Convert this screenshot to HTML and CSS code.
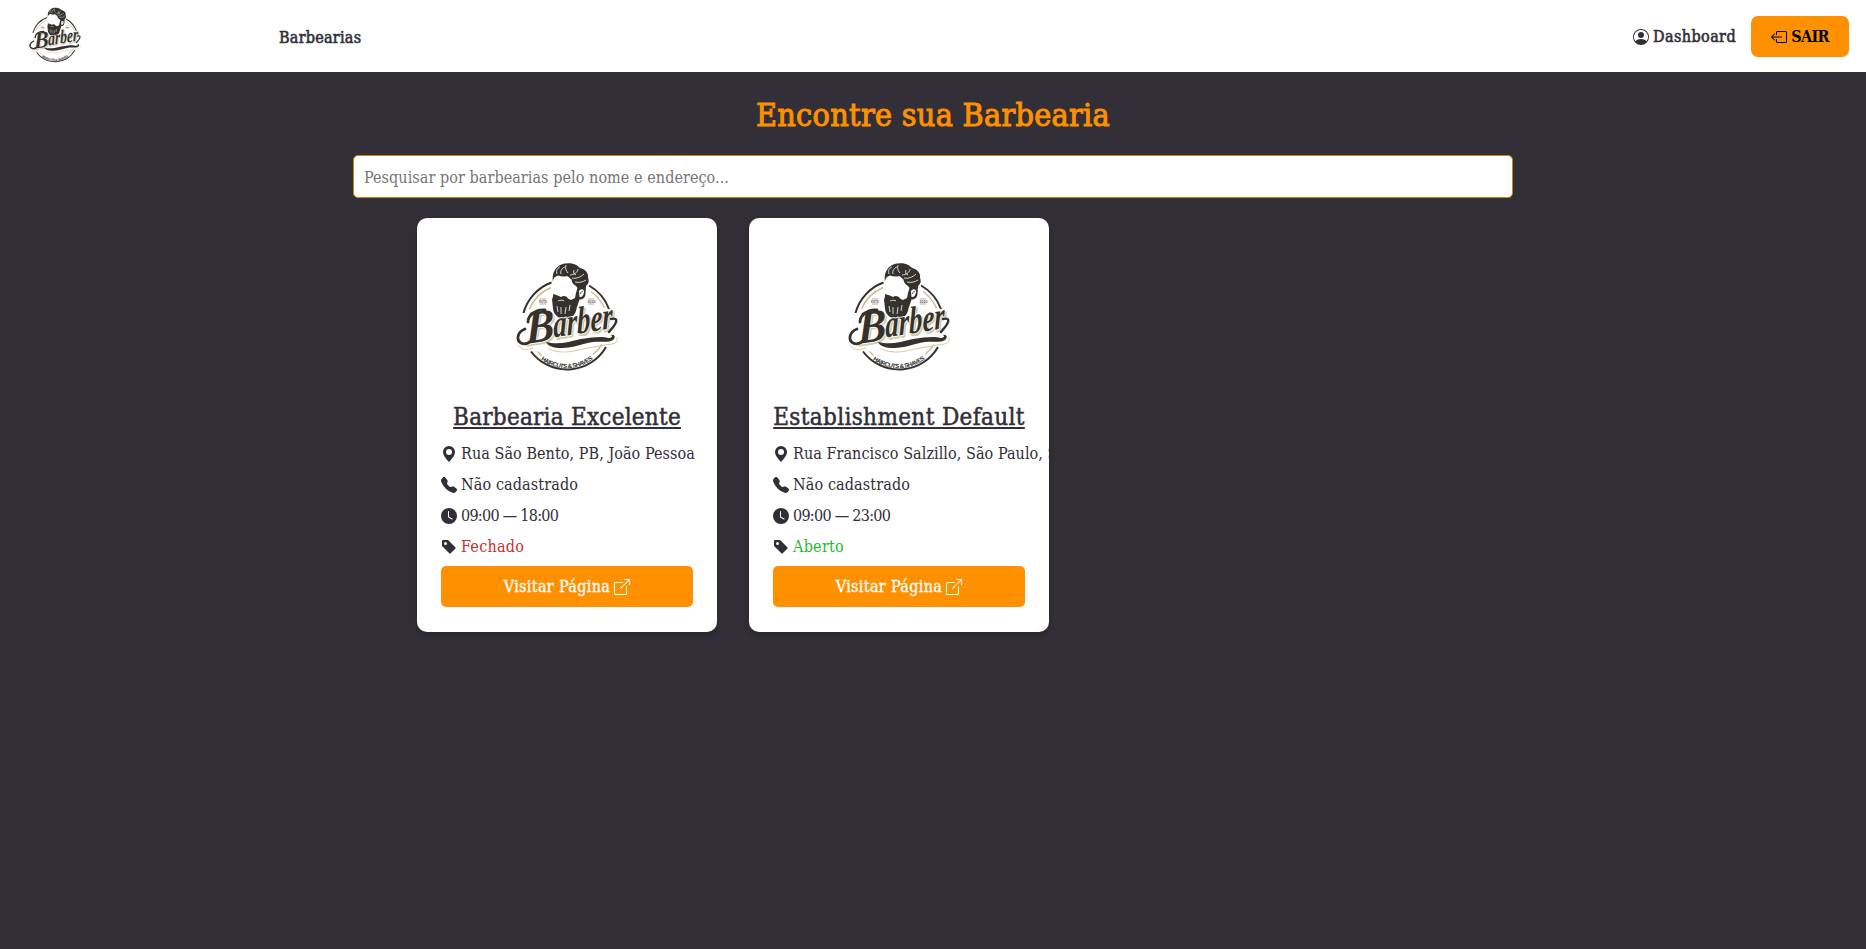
FILE: index.html
```html
<!DOCTYPE html>
<html lang="pt-BR">
<head>
<meta charset="utf-8">
<title>Barbearias</title>
<link rel="stylesheet" href="styles.css">
</head>
<body>
<svg class="sprite" aria-hidden="true">
  <symbol id="logo" viewBox="0 2 134 148">
    <g fill="none" stroke="#35322d" stroke-width="2">
      <path d="M23.5 73A45 45 0 0 1 51.5 42.5"/>
      <path d="M89 45.5A45 45 0 0 1 109 69"/>
      <path d="M31 111.500A45 45 0 0 0 106 107"/>
    </g>
    <g fill="none" stroke="#cdb98b" stroke-width="1.400">
      <path d="M29.500 69A41 41 0 0 1 51 47.500"/>
      <path d="M91 51.500A41 41 0 0 1 104.500 68"/>
      <path d="M37.500 111.500l4 4M102 104.500a41 41 0 0 1-9 10"/>
    </g>
    <g stroke="#77746f" stroke-width=".6"><path d="M40 59h6M40 64h6M88 59h6M88 64h6"/></g>
    <text class="logo-tiny" x="39" y="62.800" textLength="8" lengthAdjust="spacingAndGlyphs">ESTD</text>
    <text class="logo-tiny" x="87.500" y="62.800" textLength="8" lengthAdjust="spacingAndGlyphs">2020</text>
    <path fill="#35322d" d="M53.500 45c-1.500-6-1-12 1.500-15 2-4 7-6.500 11-6.500 7-1 11 1.500 14 4.500 5 1 9 5 8 10 1.500 3 .5 6-2 8l-.5 8c-.3 4-3 5.500-6 5.500l-3 9c-1 7-6 11-11 10-7 1-12-4-12.500-10l-1-9 1-3z"/>
    <path fill="#fff" d="M53 54c-1-6-1-12 1-16 1.500-1.500 2.500-2 4-2.500 3 1 6 1.500 9 .5 2 1 3 2.500 4.500 3.500 0 3 2 5 4.500 6.500l1.500 2-1.500 5-1 5-4 2-3-1.500c-2-3-5-3-7-1.500-2-1-4-2-8-3z"/>
    <path fill="#fff" d="M79 51c2-3 5.500-2 5 1.500-.5 3-2 5-4.500 4.500z"/>
    <g fill="none" stroke="#fff" stroke-width=".8">
      <path d="M57 34c-1-3 0-6 3-7M61 34c-1-3 1-6 4-7M66 25c-1 3 0 6 2 8M70 35c4 0 8-3 8-6M72 38c4 1 9-1 12-4M75 42c4 1 8 0 11-2M74 30c-1 3 0 4 2 5M58 61c2-1 5-1 6 0M57 66l1 6M61 67v7M66 67l-1 7M70 65l-1 6"/>
    </g>
    <path fill="none" stroke="#35322d" stroke-width=".8" d="M80.500 54c0-2 1.500-3 2.500-2"/>
    <g transform="translate(26 104) rotate(-9) skewX(-8)">
      <text class="logo-script logo-script-shade" x="1.500" y="2" textLength="29" lengthAdjust="spacingAndGlyphs">B</text>
      <text class="logo-script logo-script-shade logo-script-low" x="29.500" y="0" textLength="60" lengthAdjust="spacingAndGlyphs">arber</text>
      <text class="logo-script logo-script-ink" x="0" y="0" textLength="29" lengthAdjust="spacingAndGlyphs">B</text>
      <text class="logo-script logo-script-ink logo-script-low" x="28" y="-2" textLength="60" lengthAdjust="spacingAndGlyphs">arber</text>
    </g>
    <g fill="none" stroke-linecap="round">
      <path stroke="#d9c9a2" stroke-width="1" d="M18 105c3 5 9 6 15 3M49 109c10 5 23 3 34 0l22-4c9-1 14-2 12-7"/>
      <path stroke="#35322d" stroke-width="2.800" d="M45 70c-9-1-17 5-17 12M25 89c-8 3-9 11-4 14 4 2 8 0 11-3"/>
      <path stroke="#35322d" stroke-width="2.400" d="M111 79c4-1 6 0 5 3-1 4-5 7-7 10"/>
    </g>
    <path fill="#35322d" d="M46 102c13 3 22 0 35-3 12-2 22-3 27-1 4 0 5-2 3-3 4-1 5 3 2 5-5 3-11 1-20 2-12 2-20 6-31 6-9 0-14-2-16-6z"/>
    <path id="logo-arc" fill="none" d="M37 116.500A43 43 0 0 0 98 114.500"/>
    <text class="logo-arc-text"><textPath href="#logo-arc" startOffset="5" textLength="56">HAIRCUTS &amp; SHAVES</textPath></text>
  </symbol>
  <symbol id="pin" viewBox="0 0 16 16"><path d="M8 16s6-5.686 6-10A6 6 0 0 0 2 6c0 4.314 6 10 6 10m0-7a3 3 0 1 1 0-6 3 3 0 0 1 0 6"/></symbol>
  <symbol id="phone" viewBox="0 0 16 16"><path fill-rule="evenodd" d="M1.885.511a1.745 1.745 0 0 1 2.610.163L6.290 2.980c.329.423.445.974.315 1.494l-.547 2.190a.68.68 0 0 0 .178.643l2.457 2.457a.68.68 0 0 0 .644.178l2.189-.547a1.750 1.750 0 0 1 1.494.315l2.306 1.794c.829.645.905 1.870.163 2.611l-1.034 1.034c-.740.740-1.846 1.065-2.877.702a18.600 18.600 0 0 1-7.010-4.420 18.600 18.600 0 0 1-4.420-7.009c-.362-1.030-.037-2.137.703-2.877z"/></symbol>
  <symbol id="clock" viewBox="0 0 16 16"><path d="M16 8A8 8 0 1 1 0 8a8 8 0 0 1 16 0M8 3.500a.5.5 0 0 0-1 0V9a.5.5 0 0 0 .252.434l3.500 2a.5.5 0 0 0 .496-.868L8 8.710z"/></symbol>
  <symbol id="tag" viewBox="0 0 16 16"><path d="M2 1a1 1 0 0 0-1 1v4.586a1 1 0 0 0 .293.707l7 7a1 1 0 0 0 1.414 0l4.586-4.586a1 1 0 0 0 0-1.414l-7-7A1 1 0 0 0 6.586 1zm4 3.500a1.500 1.500 0 1 1-3 0 1.500 1.500 0 0 1 3 0"/></symbol>
  <symbol id="open" viewBox="0 0 16 16"><path d="M8.636 3.500a.5.5 0 0 0-.5-.5H1.500A1.500 1.500 0 0 0 0 4.500v10A1.500 1.500 0 0 0 1.500 16h10a1.500 1.500 0 0 0 1.500-1.500V7.864a.5.5 0 0 0-1 0V14.500a.5.5 0 0 1-.5.5h-10a.5.5 0 0 1-.5-.5v-10a.5.5 0 0 1 .5-.5h6.636a.5.5 0 0 0 .5-.5"/><path d="M16 .5a.5.5 0 0 0-.5-.5h-5a.5.5 0 0 0 0 1h3.793L6.146 9.146a.5.5 0 1 0 .708.708L15 1.707V5.500a.5.5 0 0 0 1 0z"/></symbol>
  <symbol id="person" viewBox="0 0 16 16"><path d="M11 6a3 3 0 1 1-6 0 3 3 0 0 1 6 0"/><path fill-rule="evenodd" d="M0 8a8 8 0 1 1 16 0A8 8 0 0 1 0 8m8-7a7 7 0 0 0-5.468 11.370C3.242 11.226 4.805 10 8 10s4.757 1.225 5.468 2.370A7 7 0 0 0 8 1"/></symbol>
  <symbol id="exit" viewBox="0 0 16 16"><path fill-rule="evenodd" d="M6 12.500a.5.5 0 0 0 .5.5h8a.5.5 0 0 0 .5-.5v-9a.5.5 0 0 0-.5-.5h-8a.5.5 0 0 0-.5.5v2a.5.5 0 0 1-1 0v-2A1.500 1.500 0 0 1 6.500 2h8A1.500 1.500 0 0 1 16 3.500v9a1.500 1.500 0 0 1-1.500 1.500h-8A1.500 1.500 0 0 1 5 12.500v-2a.5.5 0 0 1 1 0z"/><path fill-rule="evenodd" d="M.146 8.354a.5.5 0 0 1 0-.708l3-3a.5.5 0 1 1 .708.708L1.707 7.500H10.500a.5.5 0 0 1 0 1H1.707l2.147 2.146a.5.5 0 0 1-.708.708z"/></symbol>
</svg>

<header class="navbar">
  <a class="brand"><svg class="brand-logo" viewBox="8 16 118 118"><use href="#logo" x="0" y="2" width="134" height="148"/></svg></a>
  <nav class="nav-links"><a class="nav-text">Barbearias</a></nav>
  <div class="nav-actions">
    <a class="dashboard"><svg class="icon"><use href="#person"/></svg><span class="nav-text nav-text-dash">Dashboard</span></a>
    <button class="logout"><svg class="icon"><use href="#exit"/></svg><span class="logout-text">SAIR</span></button>
  </div>
</header>

<main class="page">
  <h1 class="title">Encontre sua Barbearia</h1>
  <input class="search" type="text" placeholder="Pesquisar por barbearias pelo nome e endereço...">
  <section class="cards">
    <article class="card">
      <svg class="card-logo"><use href="#logo"/></svg>
      <h2 class="card-title card-title-wide">Barbearia Excelente</h2>
      <p class="row"><svg class="icon"><use href="#pin"/></svg><span class="address">Rua São Bento, PB, João Pessoa</span></p>
      <p class="row"><svg class="icon"><use href="#phone"/></svg><span class="phone">Não cadastrado</span></p>
      <p class="row"><svg class="icon"><use href="#clock"/></svg><span class="hours">09:00 — 18:00</span></p>
      <p class="row"><svg class="icon"><use href="#tag"/></svg><span class="status closed">Fechado</span></p>
      <a class="visit"><span>Visitar Página</span><svg class="icon"><use href="#open"/></svg></a>
    </article>
    <article class="card">
      <svg class="card-logo"><use href="#logo"/></svg>
      <h2 class="card-title">Establishment Default</h2>
      <p class="row"><svg class="icon"><use href="#pin"/></svg><span class="address">Rua Francisco Salzillo, São Paulo, SP</span></p>
      <p class="row"><svg class="icon"><use href="#phone"/></svg><span class="phone">Não cadastrado</span></p>
      <p class="row"><svg class="icon"><use href="#clock"/></svg><span class="hours">09:00 — 23:00</span></p>
      <p class="row"><svg class="icon"><use href="#tag"/></svg><span class="status open">Aberto</span></p>
      <a class="visit"><span>Visitar Página</span><svg class="icon"><use href="#open"/></svg></a>
    </article>
  </section>
</main>
</body>
</html>
```
FILE: styles.css
```css
* { box-sizing: border-box; }
body {
  margin: 0;
  min-height: 949px;
  background: #322f38;
  color: #312e38;
  font: 16px "DejaVu Serif Condensed", "DejaVu Serif", serif;
}
.sprite { display: none; }
.icon { width: 16px; height: 16px; flex: none; fill: currentColor; }

.navbar {
  display: flex;
  align-items: center;
  height: 72px;
  padding: 0 17px 0 25px;
  background: #fff;
}
.brand { display: flex; width: 254px; padding-bottom: 5px; }
.brand-logo { width: 60px; height: 60px; }
.nav-links { flex: 1; padding-top: 2px; }
.nav-text { -webkit-text-stroke: .55px currentColor; letter-spacing: .25px; }
.nav-text-dash { letter-spacing: .4px; }
.nav-actions { display: flex; align-items: center; gap: 15px; padding-top: 1px; }
.dashboard { display: flex; align-items: center; gap: 4px; }
.logout {
  display: flex;
  align-items: center;
  justify-content: center;
  gap: 4px;
  width: 98px;
  height: 41px;
  padding: 0;
  border: 0;
  border-radius: 7px;
  background: #ff9000;
  color: #000;
  font: inherit;
}
.logout-text { font-weight: bold; letter-spacing: -.7px; }

.page { display: flex; flex-direction: column; align-items: center; }
.title {
  margin: 20px 0 0;
  height: 63px;
  color: #ff9000;
  font-size: 32px;
  font-weight: 400;
  line-height: 46px;
  letter-spacing: .3px;
  -webkit-text-stroke: 1px currentColor;
}
.search {
  width: 1160px;
  height: 43px;
  padding: 1px 10px 0;
  border: 1px solid #d88006;
  border-radius: 5px;
  background: #fff;
  font: inherit;
  letter-spacing: .06px;
}
.search::placeholder { color: #757575; opacity: 1; }

.cards {
  display: grid;
  grid-template-columns: repeat(3, 300px);
  justify-content: start;
  gap: 32px;
  width: 1032px;
  margin-top: 20px;
}
.card {
  display: flex;
  flex-direction: column;
  height: 414px;
  padding: 24px;
  border-radius: 10px;
  background: #fff;
  box-shadow: 0 4px 8px rgba(0, 0, 0, .2);
  overflow: hidden;
}
.card-logo { width: 134px; height: 148px; margin: 0 auto 9px; flex: none; }
.card-title {
  margin: 0 0 3px;
  font-size: 24px;
  font-weight: 400;
  line-height: 36px;
  text-align: center;
  white-space: nowrap;
  letter-spacing: .36px;
  -webkit-text-stroke: .5px currentColor;
  text-decoration: underline;
  text-decoration-thickness: 2px;
  text-underline-offset: 2px;
  text-decoration-skip-ink: none;
}
.card-title-wide { letter-spacing: .24px; }
.row {
  display: flex;
  align-items: center;
  gap: 4px;
  height: 31px;
  margin: 0;
  white-space: nowrap;
}
.address { letter-spacing: .06px; }
.phone { letter-spacing: .12px; }
.hours { letter-spacing: -.72px; }
.status { letter-spacing: .25px; }
.closed { color: #c53030; }
.open { color: #1fb834; }
.visit {
  display: flex;
  align-items: center;
  justify-content: center;
  gap: 4px;
  height: 41px;
  margin-top: 4px;
  border-radius: 5px;
  background: #ff9000;
  color: #fff;
  letter-spacing: .35px;
  -webkit-text-stroke: .3px currentColor;
}

.logo-tiny { font: bold 3.5px "Liberation Sans", sans-serif; fill: #65625d; }
.logo-script { font: italic bold 46px "Liberation Serif", serif; }
.logo-script-low { font-size: 38px; }
.logo-script-ink { fill: #35322d; stroke: #fff; stroke-width: 1.8px; paint-order: stroke; }
.logo-script-shade { fill: #d9c9a2; stroke: #d9c9a2; stroke-width: 1.4px; }
.logo-arc-text { font: bold 6.2px "Liberation Sans", sans-serif; fill: #35322d; }
```
